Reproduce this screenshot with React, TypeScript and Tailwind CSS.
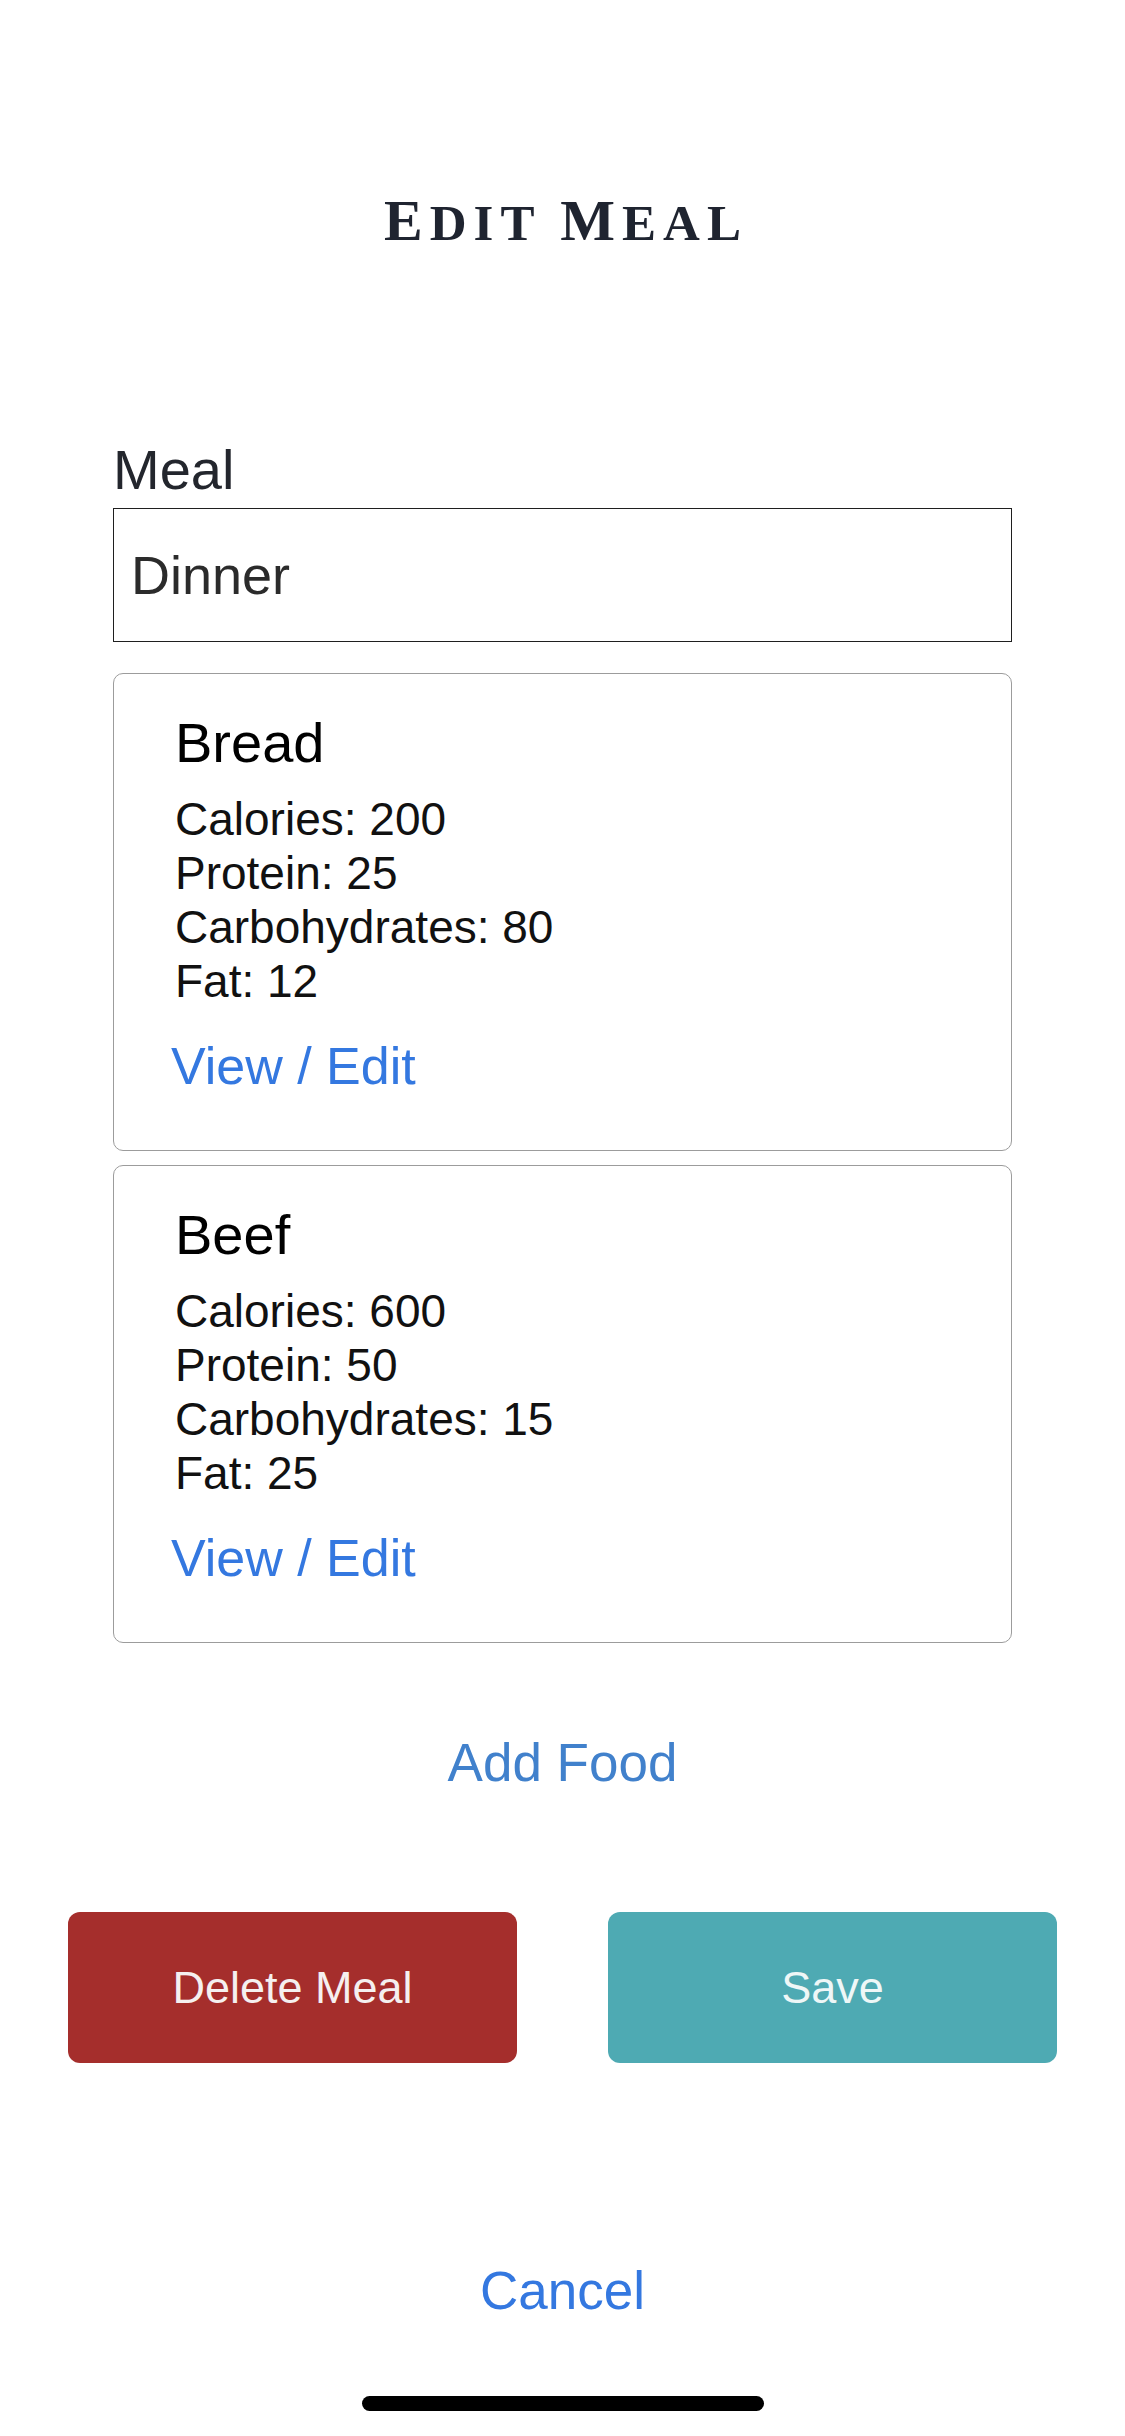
const foods = [
  { name: 'Bread', calories: 200, protein: 25, carbs: 80, fat: 12 },
  { name: 'Beef', calories: 600, protein: 50, carbs: 15, fat: 25 },
];

function FoodCard({ food }: { food: (typeof foods)[number] }) {
  return (
    <div className="h-[478px] border-[1.5px] border-[#9c9c9c] rounded-[10px] pt-[37px] pl-[57px]">
      <div className="pl-[4px]">
        <div className="text-[56px] leading-[64px] text-black">{food.name}</div>
        <div className="mt-[17px] text-[46px] leading-[54px] text-[#111]">
          <div>Calories: {food.calories}</div>
          <div>Protein: {food.protein}</div>
          <div>Carbohydrates: {food.carbs}</div>
          <div>Fat: {food.fat}</div>
        </div>
      </div>
      <div className="mt-[28px] text-[52px] leading-[60px] text-[#3478e0]">View / Edit</div>
    </div>
  );
}

export default function App() {
  return (
    <div className="w-[1125px] h-[2436px] bg-white flex flex-col font-['Liberation_Sans',Arial,sans-serif]">
      {/* Title in copperplate-ish small caps */}
      <div className="pt-[192px] h-[251px] text-center font-['Liberation_Serif',serif] font-bold text-[#1f2430] tracking-[7px] leading-none pl-[7px]">
        <span className="text-[58px]">E</span>
        <span className="text-[51px]">DIT</span>
        <span className="text-[51px]"> </span>
        <span className="text-[58px]">M</span>
        <span className="text-[51px]">EAL</span>
      </div>

      <div className="mt-[187px] px-[113px] flex flex-col">
        <div className="text-[56px] leading-[64px] text-[#23262d]">Meal</div>
        <div className="mt-[6px] h-[134px] border-[1.5px] border-[#1f1f1f] flex items-center pl-[17px] text-[54px] text-[#2b2b2b]">
          Dinner
        </div>
        <div className="mt-[31px] flex flex-col gap-[14px]">
          {foods.map((f) => (
            <FoodCard key={f.name} food={f} />
          ))}
        </div>
      </div>

      <div className="mt-[90px] text-center text-[53px] leading-[60px] text-[#4181cc]">Add Food</div>

      <div className="mt-[119px] px-[68px] flex gap-[91px]">
        <button className="flex-1 h-[151px] rounded-[12px] bg-[#a52e2c] text-[#f5f0f0] text-[45px]">
          Delete Meal
        </button>
        <button className="flex-1 h-[151px] rounded-[12px] bg-[#4eaab3] text-[#eef7f7] text-[45px]">
          Save
        </button>
      </div>

      <div className="mt-[198px] text-center text-[53px] leading-[60px] text-[#3478e0]">Cancel</div>

      <div className="mt-[75px] flex justify-center">
        <div className="w-[402px] h-[15px] rounded-full bg-black" />
      </div>
    </div>
  );
}
